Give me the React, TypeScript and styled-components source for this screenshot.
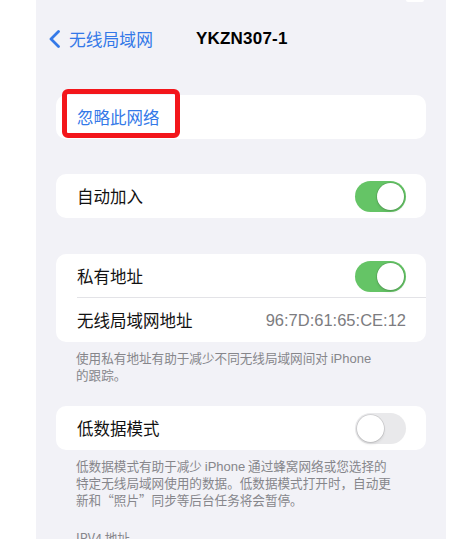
import { useState } from "react"
import styled, { createGlobalStyle } from "styled-components"

const GlobalStyle = createGlobalStyle`
  html, body {
    margin: 0;
    padding: 0;
    background: #ffffff;
  }
  body {
    font-family: "Liberation Sans", "Noto Sans CJK SC", sans-serif;
    -webkit-font-smoothing: antialiased;
  }
`

const Screen = styled.div`
  margin-left: 36px;
  width: 410px;
  height: 539px;
  overflow: hidden;
  background: #f2f2f7;
  padding: 0 20px;
  box-sizing: border-box;
  position: relative;
`

const TopPeek = styled.div`
  position: absolute;
  top: 0;
  left: 370px;
  width: 18px;
  height: 2px;
  background: #ffffff;
  border-radius: 0 0 4px 4px;
`

const NavBar = styled.div`
  display: flex;
  align-items: center;
  height: 44px;
  margin-top: 17px;
  margin-left: -8px;
`

const BackButton = styled.div`
  display: flex;
  align-items: center;
  gap: 8px;
  color: #3479e8;
  font-family: "Noto Sans CJK SC", sans-serif;
  font-size: 16.8px;
  width: 148px;
`

const Title = styled.div`
  font-family: "Liberation Sans", sans-serif;
  font-weight: bold;
  font-size: 17px;
  color: #000000;
  letter-spacing: 0.2px;
`

const Card = styled.div<{ $top: number }>`
  position: relative;
  margin-top: ${(p) => p.$top}px;
  background: #ffffff;
  border-radius: 10px;
`

const Row = styled.div<{ $divider?: boolean }>`
  display: flex;
  align-items: center;
  justify-content: space-between;
  height: 44px;
  padding: 0 20px 0 21px;
  box-sizing: border-box;
  position: relative;
  ${(p) =>
    p.$divider &&
    `
    &::after {
      content: "";
      position: absolute;
      left: 21px;
      right: 0;
      bottom: 0;
      height: 1px;
      background: #e3e3e7;
    }
  `}
`

const Label = styled.span<{ $blue?: boolean }>`
  font-family: "Noto Sans CJK SC", sans-serif;
  font-size: 16.5px;
  color: ${(p) => (p.$blue ? "#3479e8" : "#111111")};
`

const Value = styled.span`
  font-family: "Liberation Sans", sans-serif;
  font-size: 16.5px;
  color: #7c7c80;
`

const Footer = styled.div`
  padding: 7px 20px 0 20px;
  font-family: "Noto Sans CJK SC", sans-serif;
  font-size: 12.6px;
  color: #86868b;
`

const FooterLine = styled.div`
  height: 17px;
  line-height: 17px;
  white-space: nowrap;
`

const Latin = styled.span`
  font-family: "Liberation Sans", sans-serif;
  font-size: 13px;
  line-height: 17px;
`

const SectionHeader = styled.div`
  margin-top: 20px;
  padding-left: 20px;
  font-family: "Noto Sans CJK SC", sans-serif;
  font-size: 12.6px;
  color: #86868b;
`

const Highlight = styled.div`
  position: absolute;
  left: 6px;
  top: -6px;
  width: 118px;
  height: 49px;
  box-sizing: border-box;
  border: 5px solid #f3161b;
  border-radius: 6px;
  pointer-events: none;
`

const Track = styled.button<{ $on: boolean }>`
  position: relative;
  width: 51px;
  height: 31px;
  border: none;
  padding: 0;
  border-radius: 16px;
  background: ${(p) => (p.$on ? "#65c466" : "#e9e9eb")};
  cursor: pointer;
`

const Knob = styled.span<{ $on: boolean }>`
  position: absolute;
  top: 2px;
  left: ${(p) => (p.$on ? "22px" : "2px")};
  width: 27px;
  height: 27px;
  border-radius: 50%;
  background: #ffffff;
  box-shadow: 0 0 0 0.8px rgba(0, 0, 0, 0.12), 0 2px 3px rgba(0, 0, 0, 0.1);
`

function Toggle({ on, onChange }: { on: boolean; onChange: () => void }) {
  return (
    <Track $on={on} onClick={onChange}>
      <Knob $on={on} />
    </Track>
  )
}

export default function App() {
  const [autoJoin, setAutoJoin] = useState(true)
  const [privateAddr, setPrivateAddr] = useState(true)
  const [lowData, setLowData] = useState(false)

  return (
    <>
      <GlobalStyle />
      <Screen>
        <TopPeek />
        <NavBar>
          <BackButton>
            <svg width="13" height="18" viewBox="0 0 13 18">
              <path d="M10.5 1.5 L3 9 L10.5 16.5" fill="none" stroke="#3479e8" strokeWidth="2.8" strokeLinecap="round" strokeLinejoin="round" />
            </svg>
            无线局域网
          </BackButton>
          <Title>YKZN307-1</Title>
        </NavBar>

        <Card $top={34}>
          <Row>
            <Label $blue>忽略此网络</Label>
          </Row>
          <Highlight />
        </Card>

        <Card $top={35}>
          <Row>
            <Label>自动加入</Label>
            <Toggle on={autoJoin} onChange={() => setAutoJoin(!autoJoin)} />
          </Row>
        </Card>

        <Card $top={36}>
          <Row $divider>
            <Label>私有地址</Label>
            <Toggle on={privateAddr} onChange={() => setPrivateAddr(!privateAddr)} />
          </Row>
          <Row>
            <Label>无线局域网地址</Label>
            <Value>96:7D:61:65:CE:12</Value>
          </Row>
        </Card>
        <Footer>
          <FooterLine>
            使用私有地址有助于减少不同无线局域网间对 <Latin>iPhone</Latin>
          </FooterLine>
          <FooterLine>的跟踪。</FooterLine>
        </Footer>

        <Card $top={23}>
          <Row>
            <Label>低数据模式</Label>
            <Toggle on={lowData} onChange={() => setLowData(!lowData)} />
          </Row>
        </Card>
        <Footer>
          <FooterLine>
            低数据模式有助于减少 <Latin>iPhone</Latin> 通过蜂窝网络或您选择的
          </FooterLine>
          <FooterLine>特定无线局域网使用的数据。低数据模式打开时，自动更</FooterLine>
          <FooterLine>新和“照片”同步等后台任务将会暂停。</FooterLine>
        </Footer>
        <SectionHeader>IPV4 地址</SectionHeader>
      </Screen>
    </>
  )
}
